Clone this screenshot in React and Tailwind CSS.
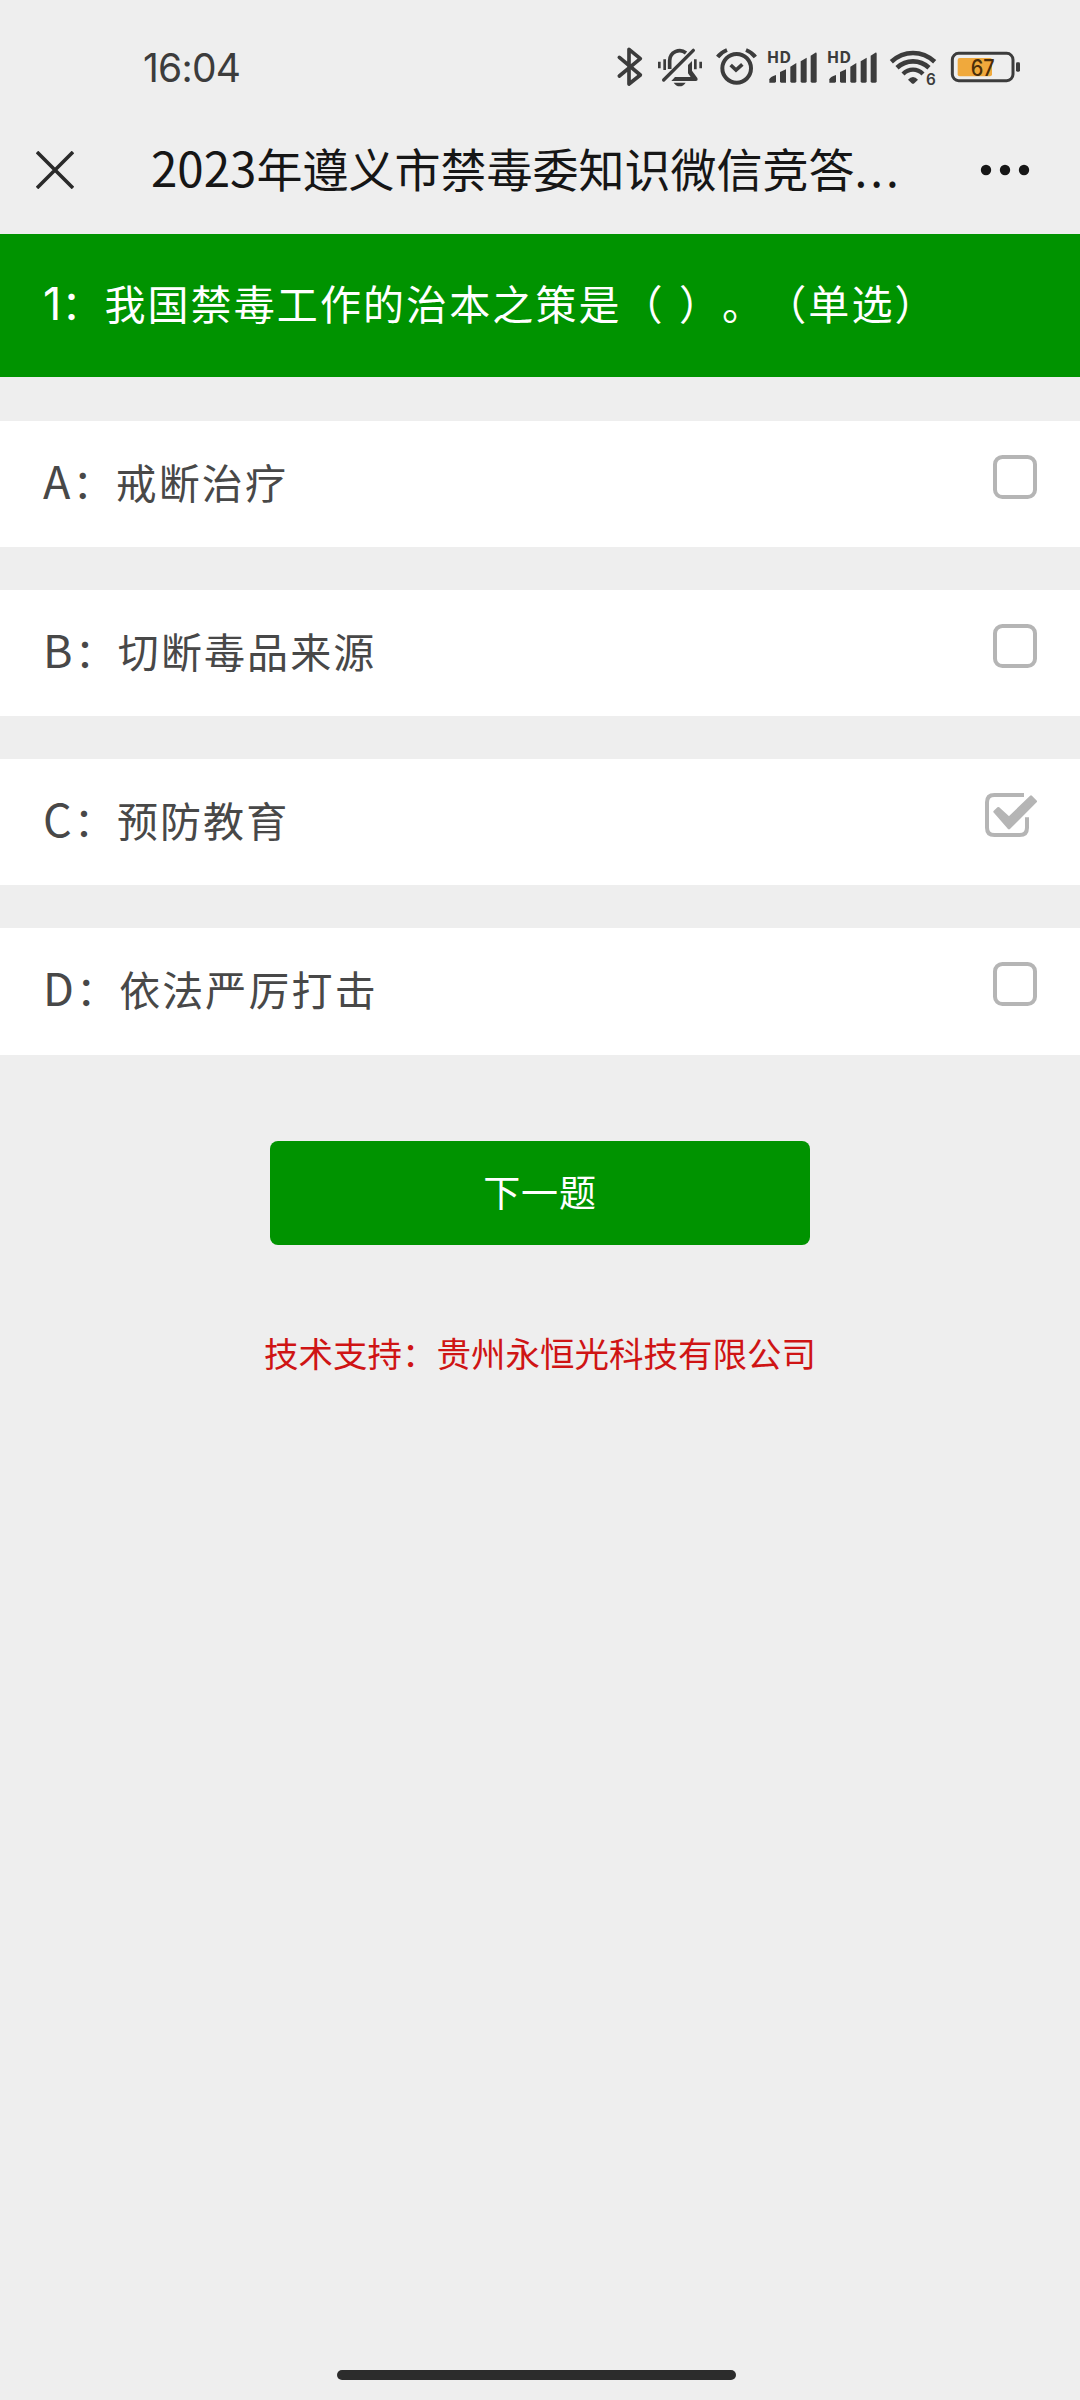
import React from "react";

const INK = "#3c3c3c";

function Bluetooth() {
  return (
    <svg className="h-[42px] w-[29px]" viewBox="48 45 87 126" fill="none" stroke={INK} strokeWidth="11" strokeLinecap="round" strokeLinejoin="round">
      <path d="M58 82 L121 135 L87 162 V58 L121 86 L58 138" />
    </svg>
  );
}

function BellOff() {
  return (
    <svg className="ml-[11px] h-[42px] w-[48px]" viewBox="168 45 144 126" fill="none" stroke={INK} strokeWidth="11">
      <path d="M209 117 V92 A30 30 0 0 1 258 69" />
      <path d="M191 150 L280 61" strokeLinecap="round" strokeWidth="10" />
      <path d="M214 153 L225 141 H272 L264 130 V105 L276 93 V122 L292 144 Q295 153 287 153 Z" fill={INK} stroke="none" />
      <path d="M221 158 H257 Q250 169 239 169 Q228 169 221 158 Z" fill={INK} stroke="none" />
      <path d="M178 95 V115 M194 88 V120 M286 88 V118 M302 95 V115" strokeWidth="8" />
    </svg>
  );
}

function Alarm() {
  return (
    <svg className="ml-[11px] h-[42px] w-[43px]" viewBox="345 45 129 126" fill="none" stroke={INK} strokeWidth="12">
      <circle cx="410" cy="115" r="43" />
      <path d="M392 105 L408 120 L427 103" strokeWidth="11" />
      <path d="M353 81 Q363 67 381 60 M438 60 Q456 67 466 81" strokeWidth="12" />
    </svg>
  );
}

function Signal() {
  return (
    <svg className="ml-[8px] h-[42px] w-[52px] overflow-visible" viewBox="498 45 156 126" fill={INK}>
      <text x="500" y="99" fontFamily="'Noto Sans CJK SC', sans-serif" fontWeight="700" fontSize="47" textLength="73" lengthAdjust="spacingAndGlyphs">HD</text>
      <path d="M508 158 V148 Q510 141 528 135 V154 Q528 158 524 158 Z" />
      <path d="M540 126 L558 118 V158 H544 Q540 158 540 154 Z" />
      <path d="M571 110 L589 99 V154 Q589 158 585 158 H575 Q571 158 571 154 Z" />
      <path d="M602 94 L620 83 V154 Q620 158 616 158 H606 Q602 158 602 154 Z" />
      <path d="M632 77 L646 68 Q650 67 650 71 V154 Q650 158 646 158 H636 Q632 158 632 154 Z" />
    </svg>
  );
}

function Wifi() {
  return (
    <svg className="ml-[11px] h-[42px] w-[49px] overflow-visible" viewBox="207 45 147 126" fill="none" stroke={INK} strokeWidth="14">
      <path d="M214 95 Q243 69 279 69 Q315 69 344 95" />
      <path d="M231 113 Q252 94 279 94 Q306 94 327 113" />
      <path d="M249 132 Q262 119 279 119 Q296 119 309 132" strokeWidth="13" />
      <path d="M264 149 Q271 141 279 141 Q287 141 294 149 L283 160 Q279 163 275 160 Z" fill={INK} stroke="none" />
      <text x="318" y="165" fill={INK} stroke="none" fontFamily="Inter, sans-serif" fontWeight="600" fontSize="46">6</text>
    </svg>
  );
}

function Battery() {
  return (
    <svg className="ml-[12px] h-[42px] w-[71px] overflow-visible" viewBox="390 45 213 126">
      <rect x="397" y="70" width="182" height="82" rx="19" fill="none" stroke={INK} strokeWidth="9" />
      <rect x="413" y="84" width="103" height="55" rx="6" fill="#f0a93c" />
      <rect x="588" y="97" width="12" height="28" rx="4" fill={INK} />
      <text x="452" y="137" fill="#4a2f0a" fontFamily="Inter, sans-serif" fontWeight="500" fontSize="67" textLength="72" lengthAdjust="spacingAndGlyphs">67</text>
    </svg>
  );
}

function CheckIcon({ checked }) {
  return (
    <svg className="mt-[34px] h-[44px] w-[52px]" viewBox="75 101 156 132" fill="none" stroke="#b5b5b5" strokeWidth="12" strokeLinejoin="round">
      {checked ? (
        <>
          <path d="M192 107 H103 Q81 107 81 129 V205 Q81 227 103 227 H179 Q201 227 201 205 V174" />
          <path d="M104 157 L115 147 L147 176 L213 112 L227 126 L147 206 Z" fill="#b5b5b5" strokeWidth="8" />
        </>
      ) : (
        <rect x="105" y="107" width="120" height="120" rx="22" />
      )}
    </svg>
  );
}

const OPTIONS = [
  { key: "A", text: "戒断治疗" },
  { key: "B", text: "切断毒品来源" },
  { key: "C", text: "预防教育", checked: true },
  { key: "D", text: "依法严厉打击" },
];

export default function App() {
  return (
    <div className="flex h-[2400px] w-[1080px] flex-col overflow-hidden bg-[#eeeeee] font-['Noto_Sans_CJK_SC',sans-serif] [text-spacing-trim:space-all]">
      <div className="flex h-[135px] shrink-0 pt-[45px] pl-[143px]">
        <div className="w-[473px] font-[Inter,sans-serif] text-[39px] leading-[45px] tracking-[-0.8px] text-[#3c3c3c]">16:04</div>
        <Bluetooth />
        <BellOff />
        <Alarm />
        <Signal />
        <Signal />
        <Wifi />
        <Battery />
      </div>

      <div className="flex h-[99px] shrink-0 items-start pl-[36px]">
        <svg className="mt-[16px] h-[38px] w-[38px]" viewBox="0 0 38 38" stroke="#2a2a2a" strokeWidth="3.6">
          <path d="M1 1 L37 37 M37 1 L1 37" />
        </svg>
        <div className="ml-[77px] w-[829px] text-[46px] leading-[64px] whitespace-nowrap text-[#161616]">
          <span className="text-[47.5px] leading-none">2023</span>年遵义市禁毒委知识微信竞答<span className="tracking-[3px]">...</span>
        </div>
        <svg className="mt-[29px] h-[12px] w-[50px]" viewBox="0 0 50 12" fill="#161616">
          <circle cx="6" cy="6" r="5.2" />
          <circle cx="25" cy="6" r="5.2" />
          <circle cx="44" cy="6" r="5.2" />
        </svg>
      </div>

      <div className="h-[143px] shrink-0 bg-[#009300] pl-[43px] text-[41px] leading-[137px] tracking-[2.1px] [word-spacing:3px] whitespace-pre text-white">
        <span className="font-[Inter,sans-serif] text-[45px] leading-none tracking-[0px]">1</span>：我国禁毒工作的治本之策是（ ）。（单选）
      </div>

      <div className="mt-[44px] flex shrink-0 flex-col gap-[43px]">
        {OPTIONS.map((o) => (
          <div key={o.key} className="flex h-[126.15px] justify-between bg-white pr-[43px] pl-[43px]">
            <div className="text-[41px] leading-[120px] tracking-[2.1px] text-[#484848]">
              <span className="text-[45px] leading-none">{o.key}</span>：{o.text}
            </div>
            <CheckIcon checked={o.checked} />
          </div>
        ))}
      </div>

      <button className="mt-[86.4px] h-[104px] w-[540px] shrink-0 self-center rounded-[8px] bg-[#009300] pb-[3px] text-[37px] tracking-[0.8px] text-white">
        下一题
      </button>

      <div className="mt-[82px] self-center text-[34.5px] leading-[50px] whitespace-nowrap text-[#cf1414]">
        技术支持：贵州永恒光科技有限公司
      </div>

      <div className="mt-auto mb-[20px] ml-[337px] h-[10px] w-[399px] shrink-0 rounded-full bg-[#2c2c2c]" />
    </div>
  );
}
